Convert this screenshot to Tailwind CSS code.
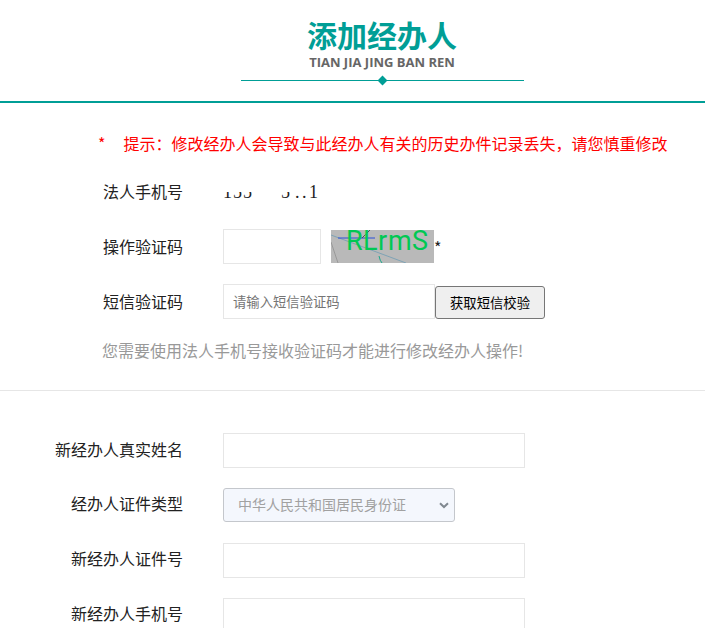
<!DOCTYPE html>
<html lang="zh">
<head>
<meta charset="utf-8">
<script src="https://cdn.jsdelivr.net/npm/@tailwindcss/browser@4"></script>
</head>
<body class="bg-white font-['Noto_Sans_CJK_SC','Liberation_Sans',sans-serif] text-[16px] text-[#222] overflow-hidden h-[628px]">
<header class="h-[103px] border-b-2 border-[#009e96] flex flex-col items-center pl-[59px]">
  <h1 class="mt-[16px] h-[37px] text-[30px] leading-[37px] font-bold text-[#009e96]">添加经办人</h1>
  <p class="h-[16px] mt-[1px] text-[13px] leading-[16px] font-bold text-[#666] font-['Open_Sans','Liberation_Sans',sans-serif]">TIAN JIA JING BAN REN</p>
  <div class="relative mt-[10px] w-[283px] h-px bg-[#009e96]">
    <span class="absolute left-[138px] top-[-3px] size-[7px] rotate-45 bg-[#009e96]"></span>
  </div>
</header>
<section class="pt-[28px] pb-[28px] border-b border-[#e6e6e6]">
  <p class="ml-[98px] h-[24px] leading-[24px] text-[#ff0000] flex gap-[18px]"><span>*</span><span>提示：修改经办人会导致与此经办人有关的历史办件记录丢失，请您慎重修改</span></p>
  <div class="flex items-center mt-[25px] h-[24px]">
    <label class="w-[183px] text-right pb-[2px]">法人手机号</label>
    <div class="relative ml-[40px] h-[24px] leading-[24px] text-[18px] font-['Liberation_Serif',serif] text-[#222] flex">
      <span class="w-[10px]">1</span><span class="w-[10px]">5</span><span class="w-[10px]">5</span>
      <span class="w-[28px]"></span>
      <span class="w-[14px]">5</span><span class="w-[7px]">.</span><span class="w-[7px]">.</span><span>1</span>
      <span class="absolute left-0 top-0 w-[85px] h-[12px] bg-white"></span>
    </div>
  </div>
  <div class="flex items-center mt-[25px] h-[35px]">
    <label class="w-[183px] text-right pb-[2px]">操作验证码</label>
    <input class="ml-[40px] w-[98px] h-[35px] border border-[#e6e6e6]">
    <div class="relative ml-[10px] w-[103px] h-[33px] bg-[#b9b9b9] text-[#00c853] text-[27px] leading-[28px] font-['Roboto',sans-serif]">
      <svg class="absolute inset-0" width="103" height="33" viewBox="0 0 103 33" fill="none">
        <path d="M0 5 L75 33" stroke="#7fa3b5" stroke-width="1"/>
        <path d="M7 8 H44" stroke="#2a4fd8" stroke-width="1"/>
        <path d="M31 8 L39 0" stroke="#555" stroke-width="1"/>
        <path d="M0 12 L7 33" stroke="#999" stroke-width="1"/>
        <path d="M48 26 Q49 31 51 33" stroke="#1aa88a" stroke-width="1"/>
      </svg>
      <div class="absolute left-[15px] top-[-3px] flex whitespace-nowrap"><span class="w-[17px]">R</span><span class="w-[15px]">L</span><span class="w-[10px]">r</span><span class="w-[24px]">m</span><span>S</span></div>
    </div>
    <span>*</span>
  </div>
  <div class="flex items-center mt-[20px] h-[35px]">
    <label class="w-[183px] text-right pb-[2px]">短信验证码</label>
    <input class="ml-[40px] w-[212px] h-[35px] border border-[#e6e6e6] pl-[9px] pr-[10px] text-[13.33px] placeholder:text-[#757575]" placeholder="请输入短信验证码">
    <button class="mt-[2px] w-[110px] h-[33px] bg-[#efefef] border border-[#767676] rounded-[3px] text-[13.33px] text-black">获取短信校验</button>
  </div>
  <p class="ml-[102px] mt-[19px] h-[24px] leading-[24px] text-[#999]">您需要使用法人手机号接收验证码才能进行修改经办人操作!</p>
</section>
<section class="pt-[42px]">
  <div class="flex items-center h-[35px]">
    <label class="w-[183px] text-right pb-[4px]">新经办人真实姓名</label>
    <input class="ml-[40px] w-[302px] h-[35px] border border-[#e6e6e6]">
  </div>
  <div class="flex items-start mt-[20px] h-[35px]">
    <label class="w-[183px] text-right leading-[30px]">经办人证件类型</label>
    <div class="relative ml-[40px] w-[232px] h-[34px] border border-[#c4c7cc] rounded-[3px] bg-[#f4f7fd] text-[#a1a1a1] text-[14px] leading-[30px] pl-[14px]">中华人民共和国居民身份证
      <svg class="absolute right-[5px] top-[13px]" width="10" height="7" viewBox="0 0 10 7" fill="none"><path d="M1 1.2 L5 5 L9 1.2" stroke="#808890" stroke-width="2"/></svg>
    </div>
  </div>
  <div class="flex items-center mt-[20px] h-[35px]">
    <label class="w-[183px] text-right pb-[5px]">新经办人证件号</label>
    <input class="ml-[40px] w-[302px] h-[35px] border border-[#e6e6e6]">
  </div>
  <div class="flex items-center mt-[20px] h-[35px]">
    <label class="w-[183px] text-right pb-[5px]">新经办人手机号</label>
    <input class="ml-[40px] w-[302px] h-[35px] border border-[#e6e6e6]">
  </div>
</section>
</body>
</html>
